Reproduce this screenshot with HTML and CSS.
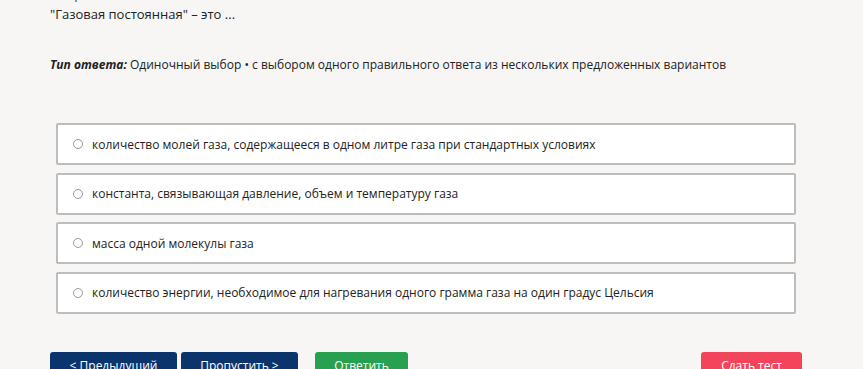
FILE: index.html
```html
<!DOCTYPE html>
<html lang="ru">

<head>
    <meta charset="UTF-8">
    <meta name="viewport" content="width=device-width, initial-scale=1.0">
    <title>Тест</title>
    <link rel="stylesheet" href="styles.css">
</head>

<body>
    <div class="page">
        <div class="question">
            <p class="question-num">Вопрос 7</p>
            <p class="question-text">"Газовая постоянная" – это ...</p>
        </div>
        <p class="answer-type"><em>Тип ответа:</em> Одиночный выбор • с выбором одного правильного ответа из нескольких предложенных вариантов</p>

        <div class="options">
            <label class="option">
                <span class="radio"></span>
                <span>количество молей газа, содержащееся в одном литре газа при стандартных условиях</span>
            </label>
            <label class="option">
                <span class="radio"></span>
                <span>константа, связывающая давление, объем и температуру газа</span>
            </label>
            <label class="option">
                <span class="radio"></span>
                <span>масса одной молекулы газа</span>
            </label>
            <label class="option">
                <span class="radio"></span>
                <span>количество энергии, необходимое для нагревания одного грамма газа на один градус Цельсия</span>
            </label>
        </div>

        <div class="buttons">
            <button class="btn btn-blue">&lt; Предыдущий</button>
            <button class="btn btn-blue btn-skip">Пропустить &gt;</button>
            <button class="btn btn-green">Ответить</button>
            <button class="btn btn-red">Сдать тест</button>
        </div>
    </div>
</body>

</html>
```

FILE: styles.css
```css
body {
    margin: 0;
    background: #f7f6f5;
    font-family: "Open Sans", sans-serif;
    font-size: 12px;
    color: #222;
    overflow: hidden;
}

.page {
    width: 752px;
    padding-left: 50px;
}

.question {
    margin-top: -16px;
    font-size: 13px;
}

.question p {
    margin: 0;
    line-height: 20px;
}

.question-num {
    color: #444;
}

.answer-type {
    margin: 31px 0 0;
    line-height: 20px;
}

.answer-type em {
    font-weight: 700;
}

.options {
    margin: 48px 0 0 6px;
    width: 740px;
    display: flex;
    flex-direction: column;
    gap: 7.5px;
}

.option {
    display: flex;
    align-items: center;
    gap: 9px;
    height: 38px;
    padding-left: 14px;
    background: #fff;
    border: 2px solid #bdbdbd;
    border-radius: 2px;
}

.radio {
    width: 8px;
    height: 8px;
    border: 1px solid #999;
    border-radius: 50%;
    margin-left: 1px;
}

.buttons {
    display: flex;
    margin-top: 38px;
    width: 752px;
}

.btn {
    font-family: "Open Sans", sans-serif;
    font-size: 12px;
    color: #fff;
    border: none;
    border-radius: 3px;
    height: 34px;
    padding: 0 0 6px;
    margin-right: 4px;
}

.btn-blue {
    background: #0b346d;
    width: 127px;
}

.btn-skip {
    width: 117px;
    margin-right: 17px;
}

.btn-green {
    background: #27a04f;
    width: 93px;
}

.btn-red {
    background: #f2455c;
    width: 101px;
    margin-left: auto;
    margin-right: 0;
}
```
